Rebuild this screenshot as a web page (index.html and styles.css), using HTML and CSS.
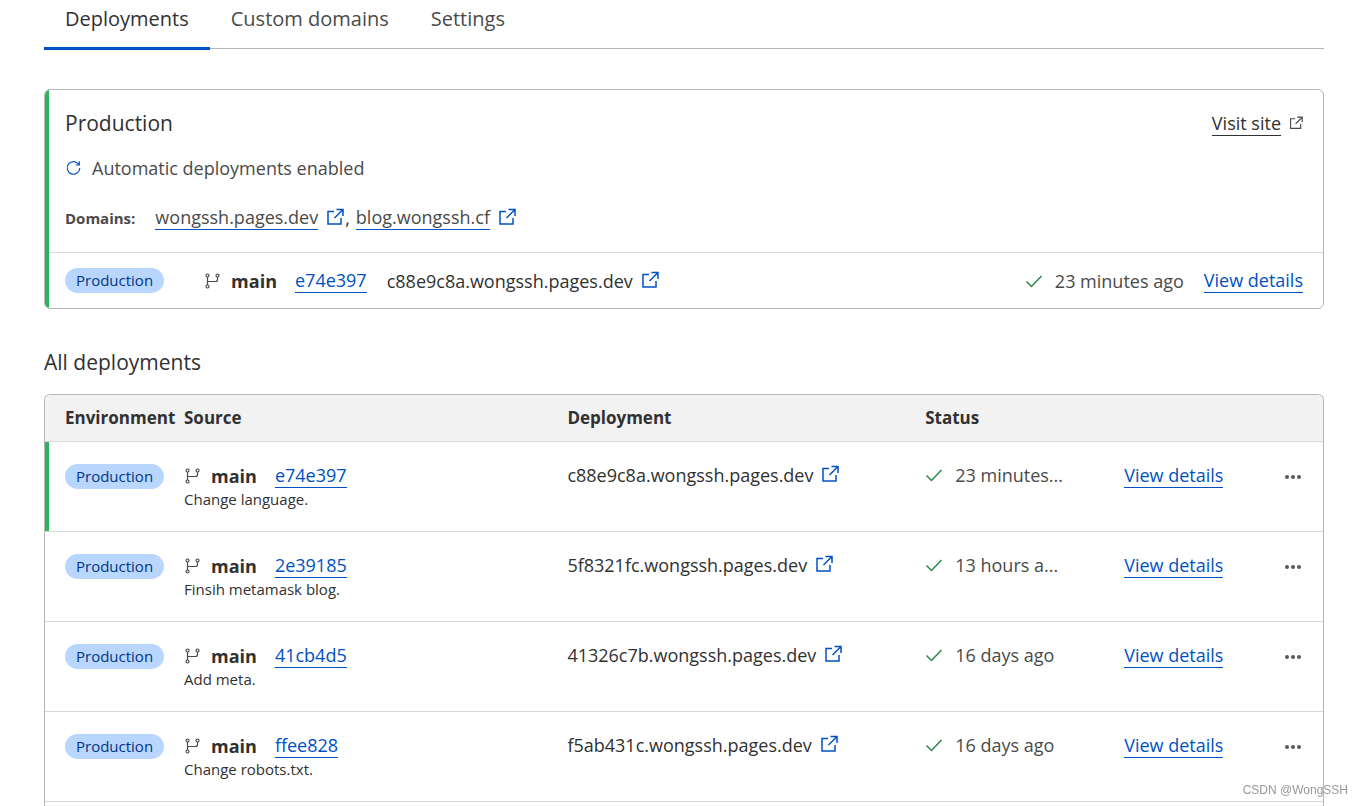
FILE: index.html
```html
<!DOCTYPE html>
<html lang="en">
<head>
<meta charset="utf-8">
<meta name="viewport" content="width=device-width, initial-scale=1">
<title>Deployments</title>
<link rel="stylesheet" href="styles.css">
</head>
<body>
<svg class="sprite" aria-hidden="true">
  <symbol id="external" viewBox="0 0 18 18"><path d="M8 3.500H2V16h13V10M10.500 1.500H17V8M16.500 2L8.500 10" fill="none" stroke="currentColor" stroke-width="1.500"/></symbol>
  <symbol id="branch" viewBox="0 0 16 16"><g fill="none" stroke="currentColor" stroke-width="1.200"><circle cx="3" cy="2.500" r="1.500"/><circle cx="13" cy="2.500" r="1.500"/><circle cx="3" cy="13.500" r="1.500"/><path d="M3 4v8M13 4v2.500q0 2-2 2H3"/></g></symbol>
  <symbol id="check" viewBox="0 0 18 18"><path d="M1.500 9.500L6.500 14.500L16.500 4" fill="none" stroke="currentColor" stroke-width="1.500"/></symbol>
  <symbol id="refresh" viewBox="0 0 16 16"><path d="M13.300 4.500A6.300 6.300 0 1 0 14.300 8M13.800 1.300V5H10" fill="none" stroke="currentColor" stroke-width="1.200"/></symbol>
  <symbol id="dots" viewBox="0 0 18 18"><g fill="currentColor"><circle cx="3" cy="9" r="2"/><circle cx="9" cy="9" r="2"/><circle cx="15" cy="9" r="2"/></g></symbol>
</svg>
<main class="page">
  <nav class="tabs">
    <a class="tab tab-active" href="#deployments" aria-current="page">Deployments</a>
    <a class="tab" href="#domains">Custom domains</a>
    <a class="tab" href="#settings">Settings</a>
  </nav>

  <section class="card">
    <div class="card-inner">
      <div class="card-top">
        <div class="card-head">
          <h2 class="heading">Production</h2>
          <span class="visit"><a class="link link-dark" href="#visit">Visit site</a><svg class="icon-small"><use href="#external"/></svg></span>
        </div>
        <p class="auto"><svg class="icon-refresh"><use href="#refresh"/></svg>Automatic deployments enabled</p>
        <div class="domains">
          <strong class="domains-label">Domains:</strong>
          <span class="domain"><a class="link link-domain" href="#d1">wongssh.pages.dev</a><svg class="icon-ext"><use href="#external"/></svg><span>,</span></span>
          <span class="domain"><a class="link link-domain" href="#d2">blog.wongssh.cf</a><svg class="icon-ext"><use href="#external"/></svg></span>
        </div>
      </div>
      <div class="card-row">
        <span class="badge">Production</span>
        <div class="source source-card"><svg class="icon-branch"><use href="#branch"/></svg><strong class="branch">main</strong><a class="link" href="#c0">e74e397</a></div>
        <div class="deploy"><span>c88e9c8a.wongssh.pages.dev</span><svg class="icon-ext"><use href="#external"/></svg></div>
        <div class="status status-card"><svg class="icon-check"><use href="#check"/></svg><span>23 minutes ago</span></div>
        <a class="link" href="#v0">View details</a>
      </div>
    </div>
  </section>

  <h2 class="heading heading-all">All deployments</h2>
  <div class="table-box">
    <table class="table">
      <colgroup><col class="col-env"><col class="col-source"><col class="col-deploy"><col class="col-status"><col class="col-view"><col class="col-menu"></colgroup>
      <thead><tr><th>Environment</th><th>Source</th><th>Deployment</th><th>Status</th><th></th><th></th></tr></thead>
      <tbody>
        <tr class="current">
          <td><span class="badge">Production</span></td>
          <td><div class="source"><svg class="icon-branch"><use href="#branch"/></svg><strong class="branch">main</strong><a class="link" href="#c1">e74e397</a></div><div class="message">Change language.</div></td>
          <td><div class="deploy"><span>c88e9c8a.wongssh.pages.dev</span><svg class="icon-ext"><use href="#external"/></svg></div></td>
          <td><div class="status"><svg class="icon-check"><use href="#check"/></svg><span class="time">23 minutes...</span></div></td>
          <td><a class="link" href="#v1">View details</a></td>
          <td><button class="menu" type="button" aria-label="More actions"><svg class="icon-dots"><use href="#dots"/></svg></button></td>
        </tr>
        <tr>
          <td><span class="badge">Production</span></td>
          <td><div class="source"><svg class="icon-branch"><use href="#branch"/></svg><strong class="branch">main</strong><a class="link" href="#c2">2e39185</a></div><div class="message">Finsih metamask blog.</div></td>
          <td><div class="deploy"><span>5f8321fc.wongssh.pages.dev</span><svg class="icon-ext"><use href="#external"/></svg></div></td>
          <td><div class="status"><svg class="icon-check"><use href="#check"/></svg><span class="time">13 hours a...</span></div></td>
          <td><a class="link" href="#v2">View details</a></td>
          <td><button class="menu" type="button" aria-label="More actions"><svg class="icon-dots"><use href="#dots"/></svg></button></td>
        </tr>
        <tr>
          <td><span class="badge">Production</span></td>
          <td><div class="source"><svg class="icon-branch"><use href="#branch"/></svg><strong class="branch">main</strong><a class="link" href="#c3">41cb4d5</a></div><div class="message">Add meta.</div></td>
          <td><div class="deploy"><span>41326c7b.wongssh.pages.dev</span><svg class="icon-ext"><use href="#external"/></svg></div></td>
          <td><div class="status"><svg class="icon-check"><use href="#check"/></svg><span class="time">16 days ago</span></div></td>
          <td><a class="link" href="#v3">View details</a></td>
          <td><button class="menu" type="button" aria-label="More actions"><svg class="icon-dots"><use href="#dots"/></svg></button></td>
        </tr>
        <tr>
          <td><span class="badge">Production</span></td>
          <td><div class="source"><svg class="icon-branch"><use href="#branch"/></svg><strong class="branch">main</strong><a class="link" href="#c4">ffee828</a></div><div class="message">Change robots.txt.</div></td>
          <td><div class="deploy"><span>f5ab431c.wongssh.pages.dev</span><svg class="icon-ext"><use href="#external"/></svg></div></td>
          <td><div class="status"><svg class="icon-check"><use href="#check"/></svg><span class="time">16 days ago</span></div></td>
          <td><a class="link" href="#v4">View details</a></td>
          <td><button class="menu" type="button" aria-label="More actions"><svg class="icon-dots"><use href="#dots"/></svg></button></td>
        </tr>
      </tbody>
    </table>
  </div>
</main>
<div class="watermark">CSDN @WongSSH</div>
</body>
</html>
```
FILE: styles.css
```css
* { box-sizing: border-box; }
body {
  margin: 0;
  background: #fff;
  color: #313131;
  font-family: "Open Sans", "Noto Sans", sans-serif;
  font-size: 18px;
  line-height: 24px;
}
h2, p { margin: 0; }
svg { flex: none; display: block; }
.sprite { position: absolute; width: 0; height: 0; }
.page { display: flex; flex-direction: column; min-height: 100vh; padding: 0 39px 0 44px; }

.tabs { display: flex; border-bottom: 1px solid #b6b6b6; height: 49px; }
.tab {
  height: 50px;
  padding: 4px 21px 0;
  font-size: 20px;
  line-height: 30px;
  color: #4a4a4a;
  text-decoration: none;
}
.tab-active { color: #313131; border-bottom: 3px solid #0051c3; }

.card { margin-top: 40px; border: 1px solid #b6b6b6; border-radius: 6px; overflow: hidden; }
.card-inner { border-left: 4px solid #2db35e; }
.card-top { padding: 18px 20px 22px 16px; border-bottom: 1px solid #d9d9d9; }
.card-head { display: flex; justify-content: space-between; align-items: center; }
.heading { font-size: 21px; line-height: 30px; font-weight: 400; }
.heading-all { margin: 38px 0 17px; }
.visit { display: flex; align-items: center; gap: 8px; color: #4a4a4a; }
.auto { display: flex; align-items: center; gap: 10px; margin-top: 18px; color: #4a4a4a; }
.domains { display: flex; align-items: center; gap: 6px; margin-top: 25px; }
.domains-label { font-size: 15px; color: #4a4a4a; margin-right: 14px; }
.domain { display: flex; align-items: center; gap: 8px; }
.domain span { margin-left: -7px; }

.link { color: #0051c3; text-decoration: none; border-bottom: 1px solid #0051c3; line-height: 24px; display: inline-block; }
.link-dark { color: #313131; border-color: #313131; }
.link-domain { color: #4a4a4a; border-color: #0051c3; }

.card-row { display: flex; align-items: center; gap: 20px; min-height: 55px; padding: 0 20px 0 16px; }
.badge {
  display: inline-block;
  padding: 0 11px;
  border-radius: 13px;
  background: #b9d6ff;
  color: #003681;
  font-size: 15px;
  line-height: 25px;
}
.source { display: flex; align-items: center; }
.source-card { margin-left: 20px; }
.branch { margin: 0 18px 0 10px; }
.deploy { display: flex; align-items: center; gap: 8px; }
.status { display: flex; align-items: center; gap: 12px; color: #4a4a4a; }
.status-card { margin-left: auto; }
.time { white-space: nowrap; }

.icon-ext { width: 18px; height: 18px; margin-bottom: 2px; color: #0051c3; }
.icon-small { width: 14px; height: 14px; }
.icon-refresh { width: 17px; height: 16px; color: #0051c3; }
.icon-branch { width: 17px; height: 16px; color: #4a4a4a; }
.icon-check { width: 18px; height: 18px; color: #2b8a4b; }
.icon-dots { width: 18px; height: 18px; }

.table-box { flex: 1; border: 1px solid #b6b6b6; border-bottom: 0; border-radius: 6px 6px 0 0; overflow: hidden; }
.table { width: 100%; border-collapse: separate; border-spacing: 0; table-layout: fixed; }
.col-env { width: 139px; }
.col-source { width: 30%; }
.col-deploy { width: 28%; }
.col-status { width: 199px; }
.col-view { width: 160px; }
.table th { height: 47px; padding: 0; background: #f2f2f2; border-bottom: 1px solid #d9d9d9; text-align: left; font-size: 17px; font-weight: 700; }
.table td { height: 90px; padding: 21px 0 0; vertical-align: top; border-bottom: 1px solid #d9d9d9; }
.table th:first-child, .table td:first-child { padding-left: 20px; }
.current td:first-child { box-shadow: inset 4px 0 #2db35e; }
.message { font-size: 15px; line-height: 22px; }
.menu { display: block; margin-top: 5px; padding: 0; border: 0; background: none; color: #595959; cursor: pointer; }

.watermark {
  position: fixed;
  right: 15px;
  bottom: 8px;
  font: 12px/16px "Liberation Sans", sans-serif;
  color: #999;
}
```
